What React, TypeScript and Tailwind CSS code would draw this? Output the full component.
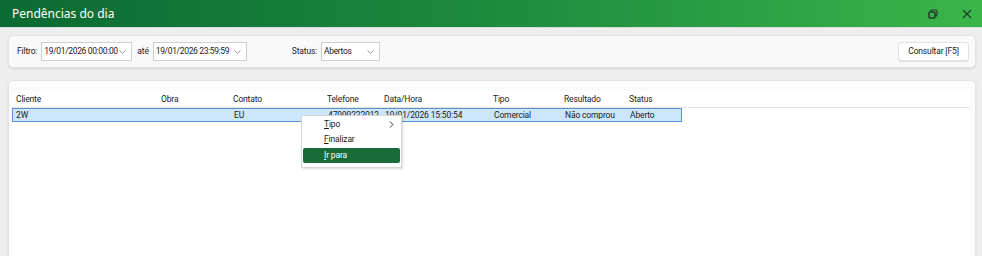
import React from "react";

const font = { fontFamily: 'Roboto, "Noto Sans", sans-serif' };

function Chevron() {
  return (
    <svg width="7" height="4" viewBox="0 0 7 4" className="shrink-0">
      <path d="M0.5 0.5 L3.5 3.5 L6.5 0.5" fill="none" stroke="#8a8a8a" strokeWidth="0.9" />
    </svg>
  );
}

function Combo({ w, text }: { w: string; text: string }) {
  return (
    <div className={`${w} h-[19px] bg-white border border-[#cfcfcf] flex items-center justify-between pl-[2px] pr-[5px] text-[#1a1a1a] whitespace-nowrap`}>
      <span className="tracking-[-0.35px]">{text}</span>
      <Chevron />
    </div>
  );
}

const cols = [
  { w: "w-[145px]", h: "Cliente", v: "2W" },
  { w: "w-[72px]", h: "Obra", v: "" },
  { w: "w-[94px]", h: "Contato", v: "EU" },
  { w: "w-[57px]", h: "Telefone", v: "47999222012" },
  { w: "w-[109px]", h: "Data/Hora", v: "19/01/2026 15:50:54" },
  { w: "w-[71px]", h: "Tipo", v: "Comercial" },
  { w: "w-[65px]", h: "Resultado", v: "Não comprou" },
  { w: "w-[56px]", h: "Status", v: "Aberto" },
];

export default function App() {
  return (
    <div className="relative w-[982px] h-[256px] overflow-hidden bg-[#eeeeee] flex flex-col text-[8.5px] tracking-[-0.15px]" style={font}>
      {/* Title bar */}
      <div className="h-[27px] shrink-0 flex items-center justify-between pl-[12px] pr-[10px] bg-gradient-to-r from-[#0b6a33] via-[#1d8a3e] to-[#3ab549] tracking-normal">
        <span className="text-white text-[12px] leading-none" style={{ fontFamily: '"Noto Sans", sans-serif' }}>Pendências do dia</span>
        <div className="flex items-center gap-[24px]">
          <svg width="10" height="10" viewBox="0 0 10 10">
            <rect x="1" y="3" width="6" height="6" rx="1" fill="none" stroke="#1f3b26" strokeWidth="1.5" />
            <path d="M3 3 V2 a1 1 0 0 1 1 -1 H8 a1 1 0 0 1 1 1 V6 a1 1 0 0 1 -1 1 H7" fill="none" stroke="#1f3b26" strokeWidth="1.2" />
          </svg>
          <svg width="10" height="10" viewBox="0 0 10 10">
            <path d="M1 1 L9 9 M9 1 L1 9" stroke="#1f3b26" strokeWidth="1.1" />
          </svg>
        </div>
      </div>
      <div className="h-[1px] bg-[#dcdcdc]" />

      <div className="flex-1 flex flex-col pl-[8px] pr-[6px] pt-[7px] gap-[12px]">
        {/* Filter card */}
        <div className="h-[33px] shrink-0 rounded-[5px] bg-[#f9f9f9] border border-[#e3e3e3] shadow-[0_1px_2px_rgba(0,0,0,0.12)] flex items-center pl-[8px] pr-[6px] text-[#1a1a1a]">
          <span className="mr-[4px]">Filtro:</span>
          <Combo w="w-[91px]" text="19/01/2026 00:00:00" />
          <span className="ml-[5px] mr-[4px]">até</span>
          <Combo w="w-[94px]" text="19/01/2026 23:59:59" />
          <span className="ml-[45px] mr-[4px]">Status:</span>
          <Combo w="w-[59px]" text="Abertos" />
          <div className="flex-1" />
          <div className="h-[19px] w-[71px] flex items-center justify-center bg-white border border-[#e2e2e2] rounded-[3px] shadow-[0_1px_1px_rgba(0,0,0,0.1)] text-[#1a1a1a]">
            Consultar [F5]
          </div>
        </div>

        {/* Grid card */}
        <div className="flex-1 rounded-t-[5px] bg-[#fbfbfb] border border-b-0 border-[#e3e3e3] shadow-[0_1px_2px_rgba(0,0,0,0.12)] pt-[10px] pl-[3px] pr-[5px]">
          <div className="bg-white h-full">
            <div className="flex h-[17px] items-center border-b border-[#e4e4e4] text-[#1a1a1a]">
              {cols.map((c) => (
                <div key={c.h} className={`${c.w} pl-[4px] shrink-0`}>{c.h}</div>
              ))}
            </div>
            <div className="flex w-[670px] h-[14px] items-center bg-[#cce6fb] border border-[#5a8fd0] text-[#1a1a1a]">
              {cols.map((c, i) => (
                <div key={c.h} className={`${c.w} ${i === 0 ? "pl-[3px]" : "pl-[4px]"} shrink-0 whitespace-nowrap overflow-hidden leading-none`}>{c.v}</div>
              ))}
            </div>
          </div>
        </div>
      </div>

      {/* Context menu */}
      <div className="absolute left-[301px] top-[115px] w-[101px] h-[53px] bg-white border border-[#d6d6d6] shadow-[1px_1px_2px_rgba(0,0,0,0.15)] pt-[1px] text-[#1a1a1a]">
        <div className="h-[15px] flex items-center justify-between pl-[22px] pr-[7px]">
          <span><span className="underline">T</span>ipo</span>
          <svg width="5" height="7" viewBox="0 0 5 7">
            <path d="M1 0.5 L4 3.5 L1 6.5" fill="none" stroke="#333" strokeWidth="1" />
          </svg>
        </div>
        <div className="h-[15px] flex items-center pl-[22px]">
          <span><span className="underline">F</span>inalizar</span>
        </div>
        <div className="mx-[1px] mt-[1px] h-[15px] flex items-center pl-[21px] bg-[#196b37] rounded-[2px] text-white">
          <span><span className="underline">I</span>r para</span>
        </div>
      </div>
    </div>
  );
}
